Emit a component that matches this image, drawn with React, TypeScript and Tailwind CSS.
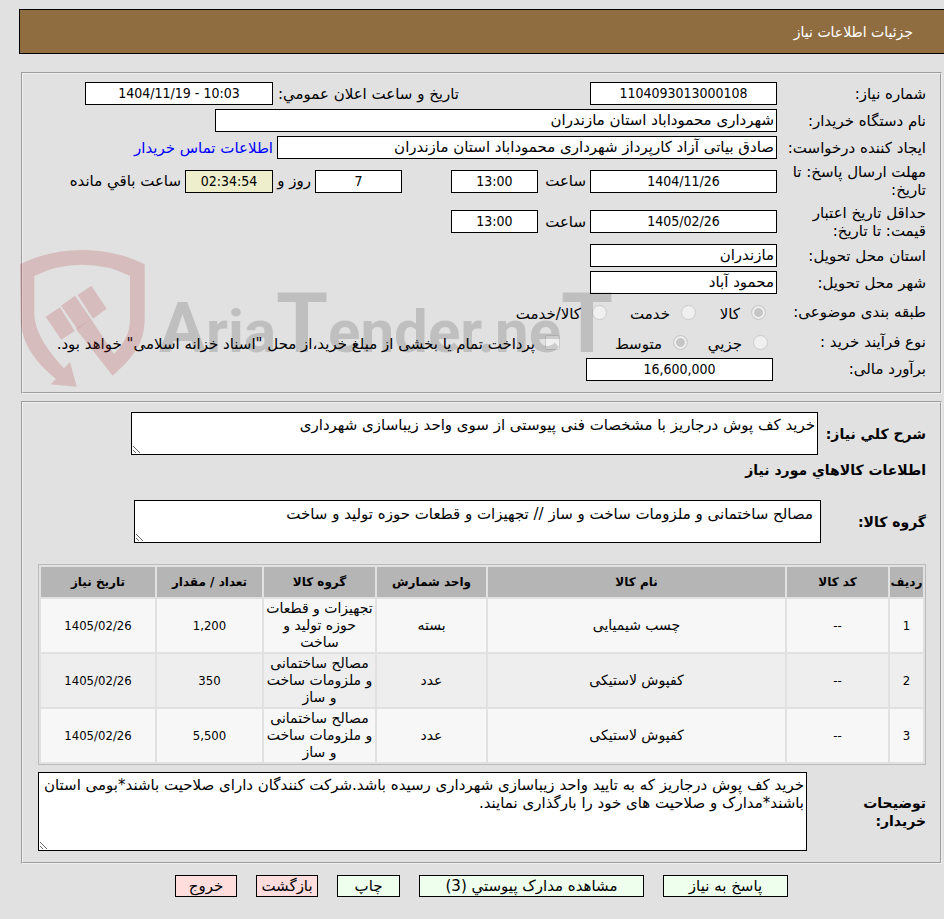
import type { ReactNode } from "react";

const field =
  "block border border-black bg-white px-[2px] leading-[21px] text-black outline-none";
const numeric =
  "text-center text-sm leading-[21px] font-['DejaVu_Sans_Condensed','DejaVu_Sans',sans-serif]";

function Row({
  label,
  htmlFor,
  className = "min-h-[27px]",
  children,
}: {
  label: ReactNode;
  htmlFor?: string;
  className?: string;
  children: ReactNode;
}) {
  return (
    <div className={`flex items-center ${className}`}>
      <label htmlFor={htmlFor} className="w-[149px] shrink-0 leading-[18px] whitespace-nowrap">
        {label}
      </label>
      {children}
    </div>
  );
}

function Field({
  id,
  value,
  label,
  className,
}: {
  id: string;
  value: string;
  label?: string;
  className: string;
}) {
  return (
    <input
      id={id}
      aria-label={label}
      readOnly
      defaultValue={value}
      className={`${field} shrink-0 ${className}`}
    />
  );
}

function Radio({
  name,
  label,
  checked,
  className,
}: {
  name: string;
  label: string;
  checked?: boolean;
  className: string;
}) {
  return (
    <label className={`flex shrink-0 items-center whitespace-nowrap ${className}`}>
      <input
        type="radio"
        name={name}
        disabled
        defaultChecked={checked}
        className="size-[15px] shrink-0 appearance-none rounded-full border border-[#cbcbcb] bg-[#f0f0f0] checked:bg-[#c6c6c6] checked:shadow-[inset_0_0_0_2px_#f0f0f0]"
      />
      <span className="pt-1">{label}</span>
    </label>
  );
}

function Watermark() {
  return (
    <svg
      aria-hidden="true"
      viewBox="0 0 620 140"
      className="pointer-events-none absolute top-[249px] left-5 h-[140px] w-[620px]"
      direction="ltr"
    >
      <g transform="translate(-20 -19) scale(0.33333)" fill="#b02832" fillOpacity="0.2">
        <path
          transform="translate(0 0)"
          d="M60 103Q145 60 247 60T434 103V265C434 330 410 375 338 437L228 297L273 267L342 373C375 335 390 310 390 265V138Q325 104 247 104T103 138V250C103 310 150 370 192 415L210 396L230 470L152 463L168 447C110 400 62 340 62 265Z"
        />
        <path d="M137 260L180 232L224 303L184 329ZM183 227L225 197L273 267L232 297ZM233 195L274 167L320 236L279 266Z" />
      </g>
      <text
        x="139"
        y="103"
        fill="#000"
        fillOpacity="0.15"
        fontFamily="Roboto, sans-serif"
        fontWeight="700"
        fontSize="60"
      >
        <tspan fontSize="70">A</tspan>ria<tspan fontSize="84">T</tspan>ender.ne
        <tspan fontSize="84">T</tspan>
      </text>
    </svg>
  );
}

const items = [
  { name: "چسب شیمیایی", unit: "بسته", group: ["تجهیزات و قطعات", "حوزه تولید و", "ساخت"], count: "1,200" },
  { name: "کفپوش لاستیکی", unit: "عدد", group: ["مصالح ساختمانی", "و ملزومات ساخت", "و ساز"], count: "350" },
  { name: "کفپوش لاستیکی", unit: "عدد", group: ["مصالح ساختمانی", "و ملزومات ساخت", "و ساز"], count: "5,500" },
];

const columns = [
  { title: "ردیف", width: "w-[33px]" },
  { title: "کد کالا", width: "w-[101px]" },
  { title: "نام کالا", width: "" },
  { title: "واحد شمارش", width: "w-[109px]" },
  { title: "گروه کالا", width: "w-[111px]" },
  { title: "تعداد / مقدار", width: "w-[105px]" },
  { title: "تاریخ نیاز", width: "w-[114px]" },
];

const numberCell =
  "p-0 text-[13px] font-['DejaVu_Sans_Condensed','DejaVu_Sans',sans-serif]";

const groupBox = "border-2 border-[#f0f0f0] [border-style:groove] pr-[14px] pl-[15px]";

export default function App() {
  return (
    <div
      dir="rtl"
      className="relative min-h-screen bg-[#e1e1e1] pt-[9px] pb-5 font-['DejaVu_Sans',sans-serif] text-[15px] leading-5 text-black"
    >
      <header className="ml-[19px] flex h-[45px] items-center border border-r-0 border-black bg-[#8f6d40] pr-[31px] text-white">
        <h1 className="text-sm">جزئیات اطلاعات نیاز</h1>
      </header>

      <main className="mr-[2px] ml-[21px] pt-[18px]">
        <section className={`${groupBox} pt-[6px] pb-[10px]`}>
          <Row label="شماره نیاز:" htmlFor="number">
            <Field id="number" value="1104093013000108" className={`w-[187px] ${numeric}`} />
            <label htmlFor="announce" className="mr-[131px] w-[186px] shrink-0 whitespace-nowrap">
              تاريخ و ساعت اعلان عمومي:
            </label>
            <input
              id="announce"
              dir="ltr"
              readOnly
              defaultValue="1404/11/19 - 10:03"
              className={`${field} w-[188px] shrink-0 ${numeric}`}
            />
          </Row>
          <Row label="نام دستگاه خریدار:" htmlFor="buyer">
            <Field id="buyer" value="شهرداری محموداباد استان مازندران" className="w-[562px]" />
          </Row>
          <Row label="ایجاد کننده درخواست:" htmlFor="creator">
            <Field
              id="creator"
              value="صادق بیاتی آزاد کارپرداز شهرداری محموداباد استان مازندران"
              className="w-[500px]"
            />
            <a href="#contact" className="mr-1 whitespace-nowrap text-[#0000ff]">
              اطلاعات تماس خریدار
            </a>
          </Row>
          <Row
            className="min-h-[40px]"
            htmlFor="deadline"
            label={
              <>
                مهلت ارسال پاسخ: تا
                <br />
                تاریخ:
              </>
            }
          >
            <Field id="deadline" value="1404/11/26" className={`w-[187px] ${numeric}`} />
            <label htmlFor="deadline-time" className="w-[52px] shrink-0 pr-1">ساعت</label>
            <Field id="deadline-time" value="13:00" className={`w-[87px] ${numeric}`} />
            <Field id="days" label="روز" value="7" className={`mr-[49px] w-[87px] ${numeric}`} />
            <label htmlFor="days" className="w-[42px] shrink-0 pr-1 whitespace-nowrap">روز و</label>
            <input
              id="remaining"
              readOnly
              defaultValue="02:34:54"
              className={`block w-[88px] shrink-0 border border-black bg-[#eeeecc] outline-none ${numeric}`}
            />
            <label htmlFor="remaining" className="pr-1 whitespace-nowrap">ساعت باقي مانده</label>
          </Row>
          <Row
            className="min-h-[41px]"
            htmlFor="validity"
            label={
              <>
                حداقل تاریخ اعتبار
                <br />
                قیمت: تا تاریخ:
              </>
            }
          >
            <Field id="validity" value="1405/02/26" className={`w-[187px] ${numeric}`} />
            <label htmlFor="validity-time" className="w-[52px] shrink-0 pr-1">ساعت</label>
            <Field id="validity-time" value="13:00" className={`w-[87px] ${numeric}`} />
          </Row>
          <Row label="استان محل تحویل:" htmlFor="province">
            <Field id="province" value="مازندران" className="w-[187px]" />
          </Row>
          <Row label="شهر محل تحویل:" htmlFor="city">
            <Field id="city" value="محمود آباد" className="w-[187px]" />
          </Row>
          <Row label="طبقه بندی موضوعی:" className="min-h-[32px]">
            <div className="flex pr-[11px]">
              <Radio name="subject" label="کالا" checked className="w-[70px] gap-[11px]" />
              <Radio name="subject" label="خدمت" className="w-[89px] gap-[11px]" />
              <Radio name="subject" label="کالا/خدمت" className="gap-[11px]" />
            </div>
          </Row>
          <Row label="نوع فرآیند خرید :" className="min-h-[28px]">
            <div className="flex pr-[9px]">
              <Radio name="process" label="جزیي" className="w-20 gap-[11px]" />
              <Radio name="process" label="متوسط" checked className="w-[128px] gap-[11px]" />
              <label className="flex items-center gap-[10px] whitespace-nowrap">
                <input
                  type="checkbox"
                  disabled
                  className="size-[15px] shrink-0 appearance-none rounded-[2px] border border-[#cbcbcb] bg-[#f0f0f0]"
                />
                <span className="pt-1">
                  پرداخت تمام یا بخشی از مبلغ خرید،از محل "اسناد خزانه اسلامی" خواهد بود.
                </span>
              </label>
            </div>
          </Row>
          <Row label="برآورد مالی:" htmlFor="estimate" className="min-h-[26px]">
            <Field id="estimate" value="16,600,000" className={`mr-1 w-[187px] ${numeric}`} />
          </Row>
        </section>

        <section className={`${groupBox} mt-[7px] pt-[9px] pb-[11px]`}>
          <div className="flex items-center">
            <label htmlFor="summary" className="w-[108px] shrink-0 text-sm font-bold whitespace-nowrap">
              شرح کلي نياز:
            </label>
            <textarea
              id="summary"
              readOnly
              className="block h-[43px] w-[687px] border border-black bg-white px-[2px] pt-[3px] leading-[18px] outline-none"
              defaultValue="خرید کف پوش درجاریز با مشخصات فنی پیوستی از سوی واحد زیباسازی شهرداری"
            />
          </div>
          <h2 className="flex h-[30px] items-center text-sm font-bold">اطلاعات کالاهاي مورد نیاز</h2>
          <div className="mt-[15px] flex items-center">
            <label htmlFor="group" className="w-[105px] shrink-0 text-sm font-bold">گروه کالا:</label>
            <textarea
              id="group"
              readOnly
              className="block h-[43px] w-[687px] border border-black bg-white px-[7px] pt-1 leading-[18px] outline-none"
              defaultValue="مصالح ساختمانی و ملزومات ساخت و ساز // تجهیزات و قطعات حوزه تولید و ساخت"
            />
          </div>

          <table className="mt-[21px] w-full table-fixed border-separate border-spacing-[2px] border border-[#bbbbbb] text-center text-sm leading-[17px]">
            <thead>
              <tr className="h-[30px] bg-[#b5b5b5] text-xs">
                {columns.map((c) => (
                  <th key={c.title} className={`p-0 whitespace-nowrap ${c.width}`}>
                    {c.title}
                  </th>
                ))}
              </tr>
            </thead>
            <tbody>
              {items.map((item, i) => (
                <tr key={i} className={`h-[53px] ${i % 2 ? "bg-[#eeeeee]" : "bg-[#f7f7f7]"}`}>
                  <td className={numberCell}>{i + 1}</td>
                  <td className={numberCell}>--</td>
                  <td className="p-0">{item.name}</td>
                  <td className="p-0">{item.unit}</td>
                  <td className="p-0">
                    {item.group.map((line) => (
                      <div key={line} className="whitespace-nowrap">{line}</div>
                    ))}
                  </td>
                  <td className={numberCell}>{item.count}</td>
                  <td className={numberCell}>1405/02/26</td>
                </tr>
              ))}
            </tbody>
          </table>

          <div className="mt-[7px] flex items-center">
            <label htmlFor="notes" className="w-[119px] shrink-0 text-sm leading-[18px] font-bold">
              توضیحات
              <br />
              خریدار:
            </label>
            <textarea
              id="notes"
              readOnly
              className="block h-[79px] grow border border-black bg-white px-[2px] pt-[3px] leading-[18px] outline-none"
              defaultValue="خرید کف پوش درجاریز که به تایید واحد زیباسازی شهرداری رسیده باشد.شرکت کنندگان دارای صلاحیت باشند*بومی استان باشند*مدارک و صلاحیت های خود را بارگذاری نمایند."
            />
          </div>
        </section>
      </main>

      <footer className="mt-[11px] flex gap-[19px] pr-[156px] whitespace-nowrap">
        <button className="w-[125px] border border-black bg-[#eeffee]">پاسخ به نیاز</button>
        <button className="w-[225px] border border-black bg-[#eeffee]">مشاهده مدارک پیوستي (3)</button>
        <button className="w-[63px] border border-black bg-[#eeffee]">چاپ</button>
        <button className="w-[62px] border border-black bg-[#ffdddd]">بازگشت</button>
        <button className="w-[62px] border border-black bg-[#ffdddd]">خروج</button>
      </footer>

      <Watermark />
    </div>
  );
}
